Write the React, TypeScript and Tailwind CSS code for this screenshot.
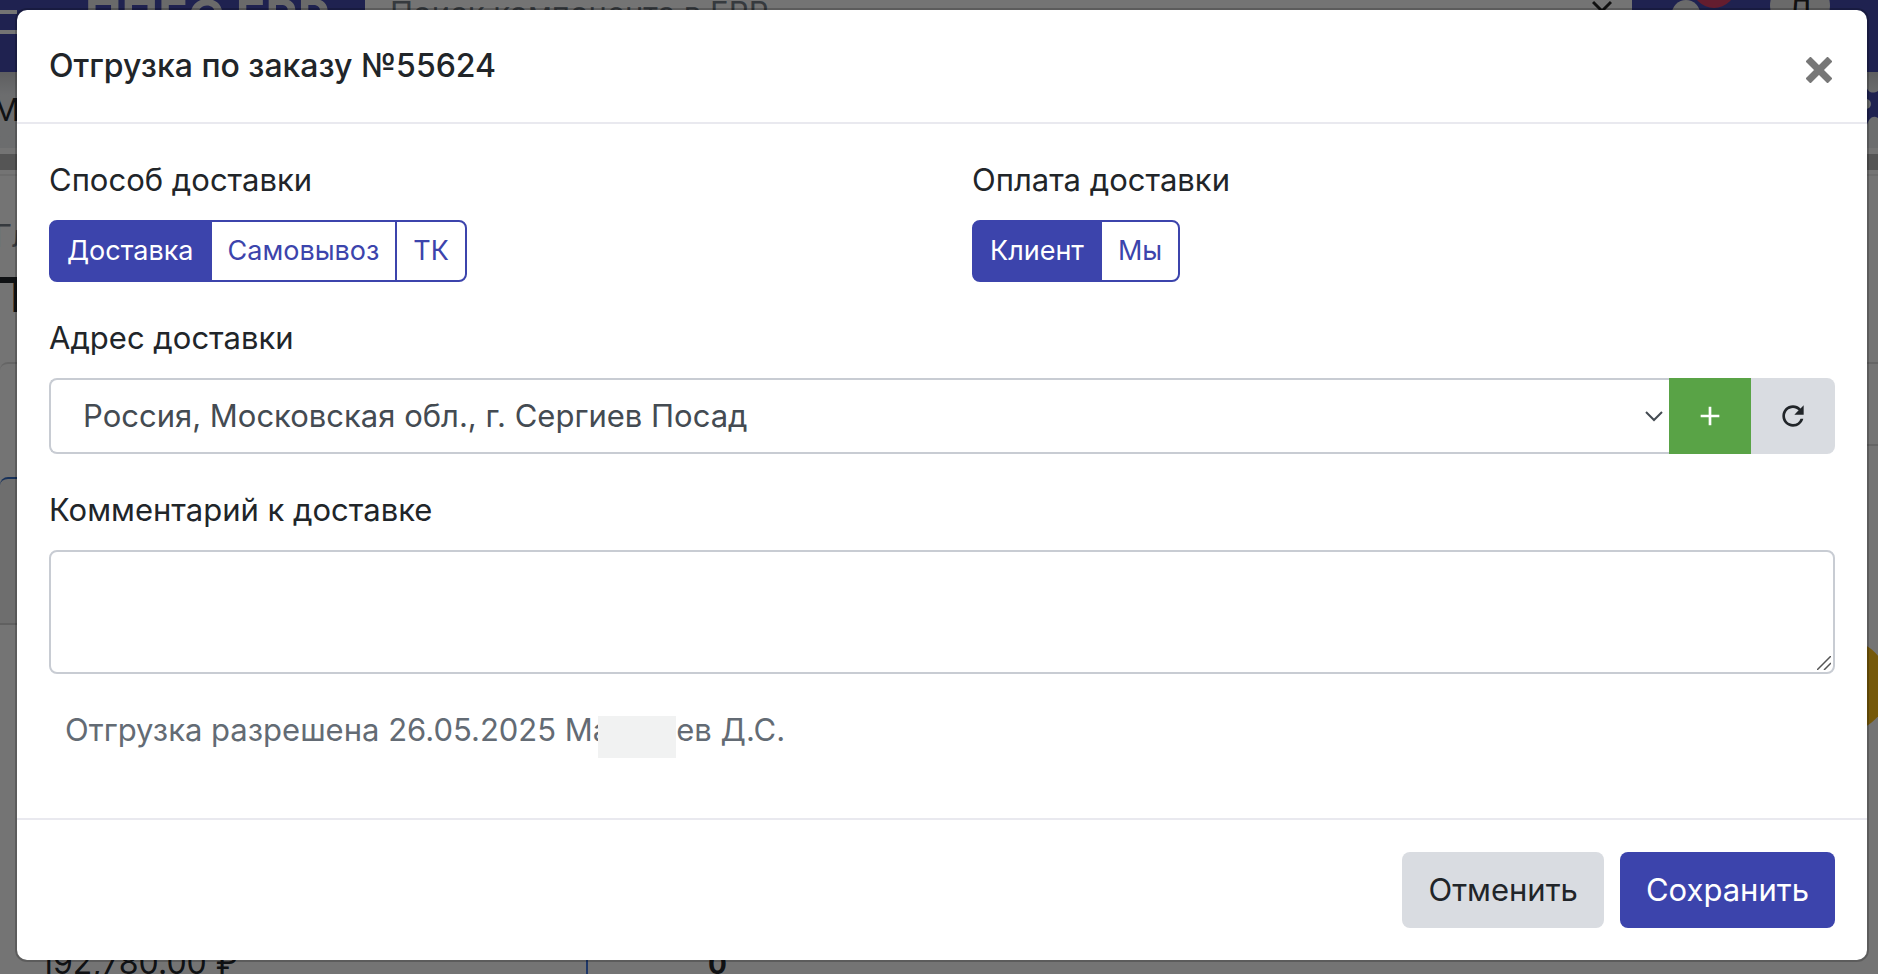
import { useState } from "react";
import { MdAdd, MdRefresh } from "react-icons/md";

const deliveryMethods = ["Доставка", "Самовывоз", "ТК"];
const payers = ["Клиент", "Мы"];

type ButtonGroupProps = {
    label: string;
    options: string[];
    value: string;
    onChange: (value: string) => void;
};

function ButtonGroup({ label, options, value, onChange }: ButtonGroupProps) {
    return (
        <div className="flex-1">
            <p className="mb-4">{label}</p>
            <div role="group" aria-label={label} className="flex text-[27px] leading-[42px]">
                {options.map((option) => (
                    <button
                        key={option}
                        type="button"
                        aria-pressed={option === value}
                        onClick={() => onChange(option)}
                        className={
                            "border-2 border-[#3c44ac] px-4 py-2 first:rounded-l-lg last:rounded-r-lg not-first:-ml-0.5 " +
                            (option === value ? "bg-[#3c44ac] text-white" : "bg-white text-[#3c44ac]")
                        }
                    >
                        {option}
                    </button>
                ))}
            </div>
        </div>
    );
}

// The ERP page that stays visible around the edges of the dialog
function PageBehind() {
    return (
        <div aria-hidden="true" className="absolute inset-0 flex flex-col overflow-hidden bg-[#e9e9e9]">
            <div className="flex h-[72px] shrink-0 bg-[#3e44a0]">
                <div className="w-[17px] pt-[10px]">
                    <div className="h-1 bg-[#e9e9e9]" />
                    <div className="mt-4 h-1 bg-[#e9e9e9]" />
                </div>
                <div className="w-[348px] pl-[68px] text-[49px] leading-[36px] font-bold whitespace-nowrap text-[#d5d5d5]">ППЕС ERP</div>
                <div className="flex flex-1 justify-between bg-[#e9e9e9] pl-[25px] text-[31px] leading-[26px] text-[#6c757d]">
                    Поиск компонента в ERP
                    <svg viewBox="0 0 20 12" className="mr-5 h-3 w-5" fill="none" stroke="#222" strokeWidth="3">
                        <path d="M1 2l9 9 9-9" />
                    </svg>
                </div>
                <div className="flex w-[246px] justify-between pr-12 pl-10">
                    <div className="relative h-7 w-7 rounded-t-full bg-[#d5d5d5]">
                        <div className="absolute -top-9 left-5 size-11 rounded-full bg-[#c83a5e]" />
                    </div>
                    <div className="-mt-6 size-[60px] rounded-full bg-[#d5d5d5] pt-6 text-center text-[31px] leading-[22px] text-[#222]">Д</div>
                </div>
            </div>
            <div className="flex h-[76px] shrink-0 items-center justify-between bg-linear-to-b from-[#bcbdc0] to-[#d8dadd] to-30% text-[31px]">
                <span className="-ml-2">М</span>
                <svg viewBox="0 0 12 76" className="h-[76px] w-3">
                    <path d="M0 14c2 7 7 8 12 5v27c-5-3-9 0-11 7H0z" fill="#3e44a0" />
                    <circle cx="0" cy="32" r="5" fill="#d8dadd" />
                </svg>
            </div>
            <div className="mt-1.5 h-4 shrink-0 bg-[#ababab]" />
            <div className="mt-1 flex flex-1 flex-col border-t-2 border-[#d8d8d8]">
                <p className="mt-9 -ml-1.5 text-[31px] text-[#6c757d]">Гл</p>
                <p className="-ml-3 h-[102px] pt-1.5 text-[48px] leading-[58px] font-bold">П</p>
                <div className="-mr-1 flex flex-1 flex-col rounded-tl-lg border-t-2 border-[#cbcbcb]">
                    <div className="mt-[113px] h-[148px] w-[586px] rounded-tl-lg border-t-2 border-b-2 border-t-[#2f62b5] border-b-[#c0c0c0] bg-[#dcdcdc]" />
                    <div className="flex flex-1 items-end">
                        <div className="flex h-full w-[588px] items-end border-r-2 border-[#3c6fd0] pl-10">
                            <span className="text-[32px] leading-[22px]">192,780.00 ₽</span>
                        </div>
                        <span className="ml-[120px] text-[28px] leading-[20px] font-bold">0</span>
                    </div>
                </div>
            </div>
            <div className="absolute top-[444px] right-0 h-0.5 w-3 bg-[#cbcbcb]" />
            <div className="absolute top-[639px] -right-[11px] size-[94px] rounded-full bg-[#eab012]" />
        </div>
    );
}

export default function App() {
    const [method, setMethod] = useState("Доставка");
    const [payer, setPayer] = useState("Клиент");
    const [comment, setComment] = useState("");

    return (
        <div className="relative min-h-screen font-[Inter,sans-serif] text-[31px] leading-[48px] text-[#212529]">
            <PageBehind />
            <div className="relative min-h-screen bg-black/50 py-2 pr-[9px] pl-[15px]">
                <div role="dialog" aria-labelledby="title" className="rounded-xl border-2 border-black/20 bg-white bg-clip-padding">
                    <div className="flex items-end justify-between border-b-2 border-[#e9e9ef] p-8">
                        <h1 id="title" className="text-[32px] font-medium">Отгрузка по заказу №55624</h1>
                        <button type="button" aria-label="Закрыть" className="flex h-10 w-8 items-center justify-center">
                            <svg viewBox="0 0 26 26" className="size-[26px]" stroke="#777" strokeWidth="7">
                                <path d="M2 2l22 22M24 2L2 24" />
                            </svg>
                        </button>
                    </div>
                    <div className="flex flex-col gap-8 px-8 pt-8 pb-16">
                        <div className="flex gap-[60px]">
                            <ButtonGroup label="Способ доставки" options={deliveryMethods} value={method} onChange={setMethod} />
                            <ButtonGroup label="Оплата доставки" options={payers} value={payer} onChange={setPayer} />
                        </div>
                        <div>
                            <label htmlFor="address" className="mb-4 block">Адрес доставки</label>
                            <div className="flex h-[76px]">
                                <div className="relative flex-1">
                                    <select id="address" className="size-full appearance-none rounded-l-lg border-2 border-r-0 border-[#c8ccd3] bg-white pl-8 text-[#444b52]">
                                        <option>Россия, Московская обл., г. Сергиев Посад</option>
                                    </select>
                                    <svg viewBox="0 0 18 12" className="pointer-events-none absolute top-8 right-1.5 h-3 w-[18px]" fill="none" stroke="#444b52" strokeWidth="2">
                                        <path d="M1 2l8 8 8-8" />
                                    </svg>
                                </div>
                                <button type="button" aria-label="Добавить адрес" className="flex w-[82px] items-center justify-center bg-[#59a346] text-white">
                                    <MdAdd size={32} />
                                </button>
                                <button type="button" aria-label="Обновить" className="flex w-[84px] items-center justify-center rounded-r-lg bg-[#d9dce1]">
                                    <MdRefresh size={32} />
                                </button>
                            </div>
                        </div>
                        <div>
                            <label htmlFor="comment" className="mb-4 block">Комментарий к доставке</label>
                            <div className="relative">
                                <textarea
                                    id="comment"
                                    value={comment}
                                    onChange={(e) => setComment(e.target.value)}
                                    className="block h-[124px] w-full resize-none rounded-lg border-2 border-[#c8ccd3] px-6 py-3"
                                />
                                <svg viewBox="0 0 14 14" className="pointer-events-none absolute right-1 bottom-1 size-3.5" stroke="#555" strokeWidth="1.5">
                                    <path d="M0 14L14 0M7 14l7-7" />
                                </svg>
                            </div>
                        </div>
                        <p className="flex h-12 px-4 text-[#636b74]">
                            Отгрузка разрешена 26.05.2025 Ма
                            <span className="z-10 mt-2.5 -ml-3 h-[42px] w-[78px] bg-[#f1f2f2]" />
                            ев Д.С.
                        </p>
                    </div>
                    <div className="flex justify-end gap-4 border-t-2 border-[#e9e9ef] p-8">
                        <button type="button" className="rounded-lg bg-[#d9dce1] px-[26px] py-[14px]">Отменить</button>
                        <button type="button" className="rounded-lg bg-[#3c44ac] px-[26px] py-[14px] text-white">Сохранить</button>
                    </div>
                </div>
            </div>
        </div>
    );
}
